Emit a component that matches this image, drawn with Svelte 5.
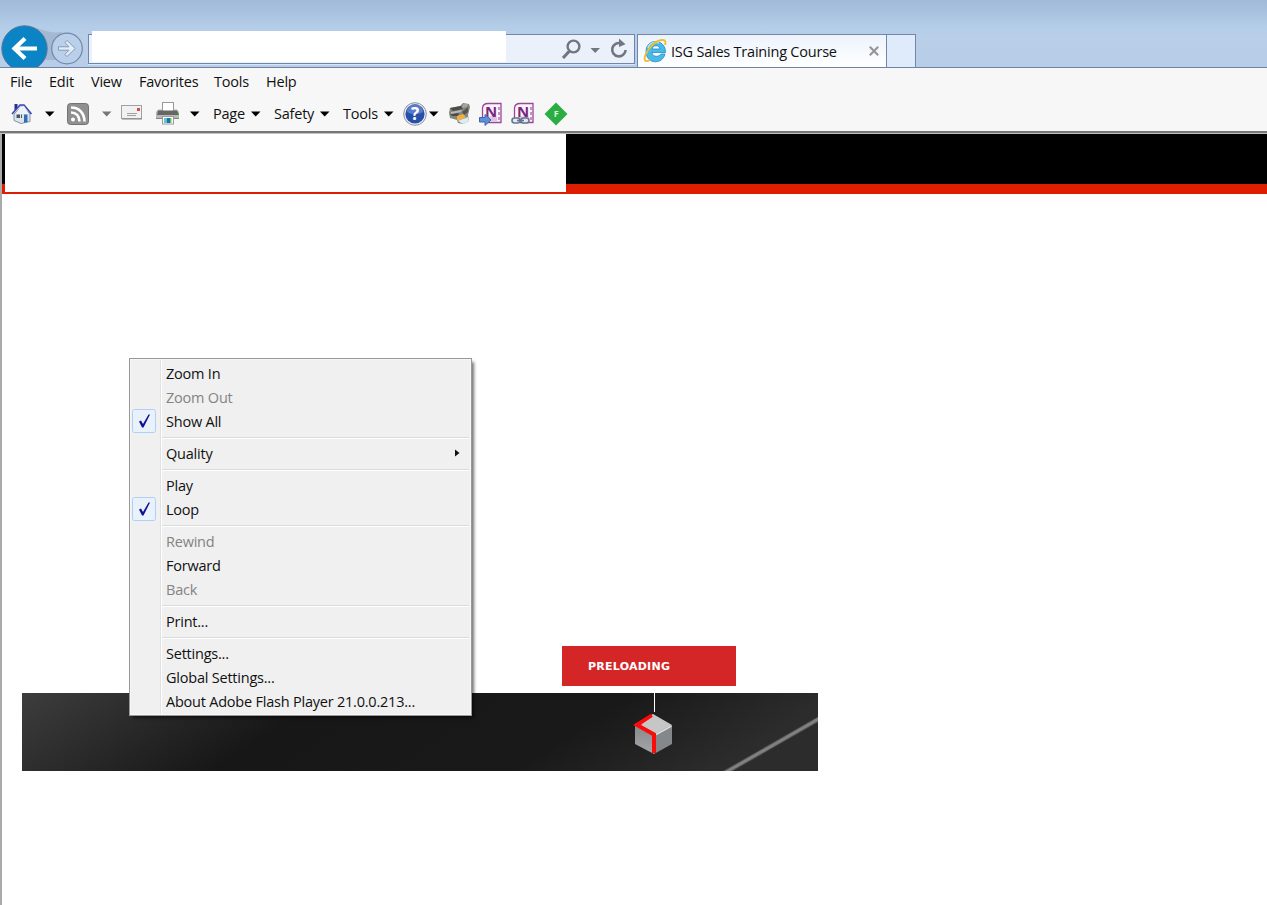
<script>
    const menus = [
        { label: 'File', width: 39 },
        { label: 'Edit', width: 42 },
        { label: 'View', width: 48 },
        { label: 'Favorites', width: 75 },
        { label: 'Tools', width: 52 },
        { label: 'Help', width: 40 }
    ];

    const tools = [
        { icon: 'home', width: 34 },
        { icon: 'arrow', width: 22 },
        { icon: 'feed', width: 35 },
        { icon: 'arrow', width: 19, dim: true },
        { icon: 'mail', width: 35 },
        { icon: 'printer', width: 34 },
        { icon: 'arrow', width: 23 },
        { label: 'Page', width: 38 },
        { icon: 'arrow', width: 23 },
        { label: 'Safety', width: 46 },
        { icon: 'arrow', width: 23 },
        { label: 'Tools', width: 41 },
        { icon: 'arrow', width: 19 },
        { icon: 'help', width: 26 },
        { icon: 'arrow', width: 19 },
        { icon: 'device', width: 31 },
        { icon: 'note', width: 32 },
        { icon: 'notelink', width: 33 },
        { icon: 'diamond', width: 24 }
    ];

    const groups = [
        [{ label: 'Zoom In' }, { label: 'Zoom Out', disabled: true }, { label: 'Show All', checked: true }],
        [{ label: 'Quality', submenu: true }],
        [{ label: 'Play' }, { label: 'Loop', checked: true }],
        [{ label: 'Rewind', disabled: true }, { label: 'Forward' }, { label: 'Back', disabled: true }],
        [{ label: 'Print...' }],
        [{ label: 'Settings...' }, { label: 'Global Settings...' }, { label: 'About Adobe Flash Player 21.0.0.213...' }]
    ];
</script>

<div class="browser">
    <header class="titlebar">
        <svg class="nav" width="88" height="43" viewBox="0 24 88 43">
            <path d="M30 26C42 29 48 34 62 32L62 60 30 60Z" fill="#a3b8d3" />
            <circle cx="24.5" cy="48.500" r="22.700" fill="#0a84c5" stroke="#56789b" />
            <path d="M37 48.500H15M25 38.500L14.500 48.500L25 58.500" fill="none" stroke="#fff" stroke-width="4.200" />
            <circle cx="67" cy="48.500" r="15.300" fill="#b9cfea" stroke="#7288a8" stroke-width="1.200" />
            <path d="M58.500 46.800H69L64.800 42.400 67 40.500 75.300 48.500 67 56.500 64.800 54.500 69 50.200H58.500Z" fill="#e3edf8" stroke="#8499b5" />
        </svg>
        <div class="address">
            <div class="redacted"></div>
            <svg width="76" height="28" viewBox="558 35 76 28">
                <circle cx="573.500" cy="46.500" r="5.900" fill="none" stroke="#72767e" stroke-width="2.400" />
                <path d="M569.500 51L563 58" stroke="#72767e" stroke-width="3.200" />
                <path d="M590.500 48H600L595.200 53Z" fill="#72767e" />
                <path d="M621 43.300A6.700 6.700 0 1 0 625.600 50" fill="none" stroke="#72767e" stroke-width="2.600" />
                <path d="M619 38.500L625.500 44.300 619 47Z" fill="#72767e" />
            </svg>
        </div>
        <div class="tab">
            <svg width="24" height="26" viewBox="643 38 24 26">
                <path d="M665 54H661C659.500 57 652.500 57.500 652 52.500H665.500C666 38.500 646 37.500 646 51.500C646 64.500 662.500 65 665 54ZM652 49C653 44.500 659 44.500 660 49Z" fill="#48b9e9" stroke="#258ec8" stroke-width=".8" fill-rule="evenodd" />
                <path d="M648 48C649 43 655 41 659 43" fill="none" stroke="#a8e4fa" stroke-width="1.500" />
                <path d="M665 45C668 36 655 40 649 49C643 57 643 64 650 60" fill="none" stroke="#edbd32" stroke-width="1.900" />
            </svg>
            <span class="tab-title">ISG Sales Training Course</span>
            <svg width="10" height="10" viewBox="0 0 10 10">
                <path d="M.8.8L9.200 9.200M9.200.8L.8 9.200" stroke="#969696" stroke-width="2.200" />
            </svg>
        </div>
        <div class="new-tab"></div>
    </header>

    <div class="bars">
        <nav class="menubar">
            {#each menus as menu}
                <span style:width="{menu.width}px">{menu.label}</span>
            {/each}
        </nav>
        <div class="toolbar">
            {#each tools as tool}
                <div class="tool" style:width="{tool.width}px">
                    {#if tool.label}
                        <span>{tool.label}</span>
                    {:else if tool.icon == 'arrow'}
                        <svg width="10" height="24" viewBox="0 0 10 24">
                            <path d="M0 9.500H9.500L4.700 14.500Z" fill={tool.dim ? '#777' : '#000'} />
                        </svg>
                    {:else if tool.icon == 'home'}
                        <svg width="24" height="24" viewBox="0 0 24 24">
                            <path d="M3 12L11 3.500 19 12V19.500L10 21.500 3 18.500Z" fill="#dce5ef" stroke="#8494aa" />
                            <path d="M3.500 2V9L6.500 6V2Z" fill="#28308f" />
                            <path d="M1 12L9 3H13L20.500 12" fill="none" stroke="#3946b5" stroke-width="1.600" />
                            <path d="M9 5L5 12H18L13 4Z" fill="#eef1f6" />
                            <path d="M5.500 12.500H9V16H5.500ZM10 12.500H11V16H10Z" fill="#4d565f" />
                            <path d="M13 12.500H16.500V20L13 20.800Z" fill="#356eaf" />
                        </svg>
                    {:else if tool.icon == 'feed'}
                        <svg width="22" height="24" viewBox="0 0 22 24">
                            <rect x=".5" y="1.500" width="21" height="21" rx="3" fill="#909090" stroke="#737373" />
                            <circle cx="6" cy="17.500" r="2" fill="#fff" />
                            <path d="M4 10.500C9 10.500 12.500 14 12.500 19.500M4 5.500C12 5.500 17.500 11 17.500 19.500" fill="none" stroke="#fff" stroke-width="2.600" />
                        </svg>
                    {:else if tool.icon == 'mail'}
                        <svg width="22" height="24" viewBox="0 0 22 24">
                            <rect x=".5" y="3.500" width="20" height="13" fill="#f1f1f1" stroke="#a1a1a1" />
                            <path d="M1 17H21" stroke="#858585" />
                            <rect x="16" y="6" width="3" height="3" fill="#d64d4b" />
                            <path d="M6 11.500H16M6 13.500H15" stroke="#a0a0a0" />
                        </svg>
                    {:else if tool.icon == 'printer'}
                        <svg width="24" height="24" viewBox="0 1 24 24">
                            <rect x="6.500" y="1.500" width="11" height="10" fill="#fff" stroke="#999" />
                            <path d="M0 11L2 8.500H6V12H18V8.500H21L23 11V18H0Z" fill="#b8b8b8" />
                            <path d="M2 9.500H21L23 14H1Z" fill="#666" />
                            <path d="M0 17.500H23" stroke="#858585" />
                            <rect x="6.500" y="15.500" width="11" height="7.500" fill="#fff" stroke="#999" />
                            <path d="M8 17H11V22H8Z" fill="#65c1cc" />
                            <path d="M11 17H14V22H11Z" fill="#1974a6" />
                            <path d="M14 17H15.500V22H14Z" fill="#6fbd68" />
                            <rect x="20" y="14" width="2" height="2" fill="#91df7a" />
                        </svg>
                    {:else if tool.icon == 'help'}
                        <svg width="24" height="24" viewBox="0 0 24 24">
                            <circle cx="12" cy="12" r="11.300" fill="#e9edf5" stroke="#8e929c" />
                            <circle cx="12" cy="12" r="9.600" fill="#264fa9" />
                            <path d="M4 10A8 8 0 0 1 20 10C15 13 9 13 4 10Z" fill="#597bc7" />
                            <text class="question" x="12" y="18" text-anchor="middle">?</text>
                        </svg>
                    {:else if tool.icon == 'device'}
                        <svg width="23" height="24" viewBox="0 0 23 24">
                            <path d="M2 6L12 4 15 1 21 2 22 5 20 13 21 19 15 22 10 21 9 18 2 16 1 11Z" fill="#85857f" />
                            <path d="M2 6L13 4 15 7 5 9ZM2 12L11 11 10 14 4 14Z" fill="#4b4c49" />
                            <path d="M15 2L20 2 19 5 14 6Z" fill="#a4a49d" />
                            <path d="M3 10L14 8 13 10 3 12Z" fill="#b9b9b3" />
                            <path d="M14 10L20 5V10L16 13Z" fill="#55564f" />
                            <path d="M9 14L15 12 18 15 12 19 9 18Z" fill="#efad42" />
                            <path d="M10 19L15 17 20 15 21 19 15 22Z" fill="#d9edf7" />
                        </svg>
                    {:else if tool.icon == 'note' || tool.icon == 'notelink'}
                        <svg width="24" height="24" viewBox="0 0 24 24">
                            <path d="M3.500 17V6Q4 1.500 9 1.500H22V20.500H9" fill="#fbf4fa" stroke="#9b469a" stroke-width="1.300" />
                            <path d="M19 5H21V8H19ZM19 10H21V13H19ZM19 15H21V18H19Z" fill="#c990c8" />
                            <path d="M5 16Q9 13 18 15V19H6Z" fill="#dfc2df" />
                            <text class="letter" x="12" y="14.500" text-anchor="middle">N</text>
                            {#if tool.icon == 'note'}
                                <path d="M.5 15.500H6V12.500L12 18 6 23.500V20H.5Z" fill="#5c91da" stroke="#3c65a7" />
                            {:else}
                                <rect x="1" y="16" width="8" height="5" rx="2.500" fill="#e4e9f1" stroke="#65758f" stroke-width="1.600" />
                                <rect x="10" y="16" width="8" height="5" rx="2.500" fill="#e4e9f1" stroke="#65758f" stroke-width="1.600" />
                                <path d="M6 18.500H13" stroke="#65758f" stroke-width="1.600" />
                            {/if}
                        </svg>
                    {:else}
                        <svg width="24" height="24" viewBox="0 0 24 24">
                            <path d="M12 .5L23.500 12 12 23.500.5 12Z" fill="#2bad44" />
                            <text class="f" x="12" y="15" text-anchor="middle">F</text>
                        </svg>
                    {/if}
                </div>
            {/each}
        </div>
    </div>

    <main class="page">
        <div class="masthead">
            <div class="blank"></div>
        </div>
        <div class="stage">
            <div class="preloading">PRELOADING</div>
            <svg class="banner" width="796" height="78" viewBox="22 693 796 78">
                <defs>
                    <linearGradient id="shade" x2="1" y2=".15">
                        <stop offset="0" stop-color="#3d3d3d" />
                        <stop offset=".2" stop-color="#292929" />
                        <stop offset=".38" stop-color="#171717" />
                        <stop offset=".75" stop-color="#191919" />
                        <stop offset="1" stop-color="#2c2c2c" />
                    </linearGradient>
                    <linearGradient id="cube" x2="0" y2="1">
                        <stop offset="0" stop-color="#85888b" />
                        <stop offset="1" stop-color="#a5a7a9" />
                    </linearGradient>
                </defs>
                <path d="M22 693H818V771H22Z" fill="url(#shade)" />
                <path d="M720 775.500L822 717" stroke="#4c4c4c" stroke-width="5" />
                <path d="M720 775.500L822 717" stroke="#808080" stroke-width="3" />
                <path d="M654.500 693V712" stroke="#fff" />
                <path d="M635 724L654 734V754L635 744Z" fill="url(#cube)" />
                <path d="M654 734L672 725V744L654 754Z" fill="#85888b" />
                <path d="M635 724L653 714 672 725 655 734Z" fill="#c6c6c6" />
                <path d="M656 734.500L671.500 726" stroke="#ddd" stroke-width="1.500" />
                <path d="M652 715.500L637 725 654 734.500V753" fill="none" stroke="#f90b0b" stroke-width="4" />
                <path d="M642 724L654 716 669 725 656 732Z" fill="#c6c6c6" />
            </svg>
        </div>
    </main>

    <div class="context-menu">
        {#each groups as group, i}
            {#if i > 0}
                <div class="separator"></div>
            {/if}
            {#each group as item}
                <div class="item" class:disabled={item.disabled}>
                    <div class="gutter">
                        {#if item.checked}
                            <svg width="24" height="26" viewBox="0 0 24 26">
                                <rect x=".5" y=".5" width="23" height="23" rx="2" fill="#e9f1fb" stroke="#aecff7" />
                                <path d="M7 12.500L9 11.500 11 15 16.500 5.500 18 5.500 11.500 18.500H10Z" fill="#10109a" />
                            </svg>
                        {/if}
                    </div>
                    <span class="name">{item.label}</span>
                    {#if item.submenu}
                        <svg width="5" height="10" viewBox="0 0 5 10">
                            <path d="M0 .5L4.500 4 0 7.500Z" fill="#111" />
                        </svg>
                    {/if}
                </div>
            {/each}
        {/each}
    </div>
</div>

<style>

:global(body) {
    background: #fff;
}

.browser {
    position: relative;
    display: flex;
    flex-direction: column;
    width: 1267px;
    height: 905px;
    overflow: hidden;
    font-family: "Open Sans", "Noto Sans", sans-serif;
    font-size: 14.5px;
    letter-spacing: -0.22px;
    line-height: 24px;
    color: #111;
}

svg {
    display: block;
    flex: none;
}

.titlebar {
    box-sizing: border-box;
    display: flex;
    align-items: flex-end;
    height: 68px;
    border-bottom: 1px solid #6c83a7;
    background: linear-gradient(#a0bad7, #b3cce8 26px, #b9cfe8 36px, #b8cee8);
}

.address {
    box-sizing: border-box;
    display: flex;
    justify-content: space-between;
    align-items: flex-end;
    width: 547px;
    height: 30px;
    margin-bottom: 3px;
    border: 1px solid #7087ab;
    background: #eaf1fb;
    box-shadow: 0 1px #d8e5f5;
}

.redacted {
    width: 414px;
    height: 31px;
    margin-left: 3px;
    margin-bottom: 1px;
    background: #fff;
}

.tab {
    box-sizing: border-box;
    display: flex;
    align-items: center;
    width: 250px;
    height: 33px;
    margin-left: 2px;
    padding-left: 5px;
    border: 1px solid #7087ab;
    border-bottom: 0;
    background: linear-gradient(#edf3fc, #fff);
}

.tab-title {
    width: 198px;
    margin-left: 4px;
    padding-top: 2px;
    white-space: nowrap;
}

.new-tab {
    box-sizing: border-box;
    width: 29px;
    height: 33px;
    border: 1px solid #7087ab;
    border-width: 1px 1px 0 0;
    background: #dfeafa;
}

.bars {
    box-sizing: border-box;
    height: 66px;
    border-bottom: 1px solid #c2c2c2;
    background: #f7f7f7;
    box-shadow: inset 0 -2px #777;
}

.menubar {
    display: flex;
    height: 28px;
    padding-left: 10px;
    line-height: 28px;
}

.toolbar {
    display: flex;
    align-items: center;
    height: 36px;
    padding-left: 11px;
}

.tool {
    flex: none;
    white-space: nowrap;
}

.question {
    font: bold 17px "Noto Sans", sans-serif;
    fill: #fff;
}

.letter {
    font: bold 15px "Noto Sans", sans-serif;
    fill: #7a287a;
}

.f {
    font: bold 9px "Noto Sans", sans-serif;
    fill: #d4f4d5;
}

.page {
    flex: 1;
    border-left: 2px solid #aaa;
}

.masthead {
    box-sizing: border-box;
    height: 60px;
    padding-left: 3px;
    background: linear-gradient(#000 50px, #df1e00 50px);
}

.blank {
    width: 561px;
    height: 58px;
    background: #fff;
}

.stage {
    padding: 452px 0 0 20px;
}

.preloading {
    width: 148px;
    height: 40px;
    margin: 0 0 7px 540px;
    padding-left: 26px;
    background: #d42626;
    color: #fff;
    font: bold 11px/41px "DejaVu Sans", sans-serif;
    letter-spacing: 0.25px;
}

.context-menu {
    position: absolute;
    left: 129px;
    top: 358px;
    box-sizing: border-box;
    width: 343px;
    height: 358px;
    padding: 3px 2px 1px;
    border: 1px solid #989898;
    background: linear-gradient(90deg, #f0f0f0 30px, #e1e1e1 30px, #e1e1e1 31px, #fff 31px, #fff 32px, #f0f0f0 32px);
    box-shadow: inset 0 0 0 1px #f6f6f6, 3px 3px 3px -1px rgba(0, 0, 0, 0.55);
}

.item {
    display: flex;
    align-items: center;
    height: 24px;
}

.gutter {
    width: 24px;
    margin-right: 10px;
}

.name {
    width: 289px;
    white-space: nowrap;
}

.disabled {
    color: #838383;
}

.separator {
    height: 1px;
    margin: 3px 0 3px 30px;
    border-bottom: 1px solid #fff;
    background: #dcdcdc;
}

</style>
